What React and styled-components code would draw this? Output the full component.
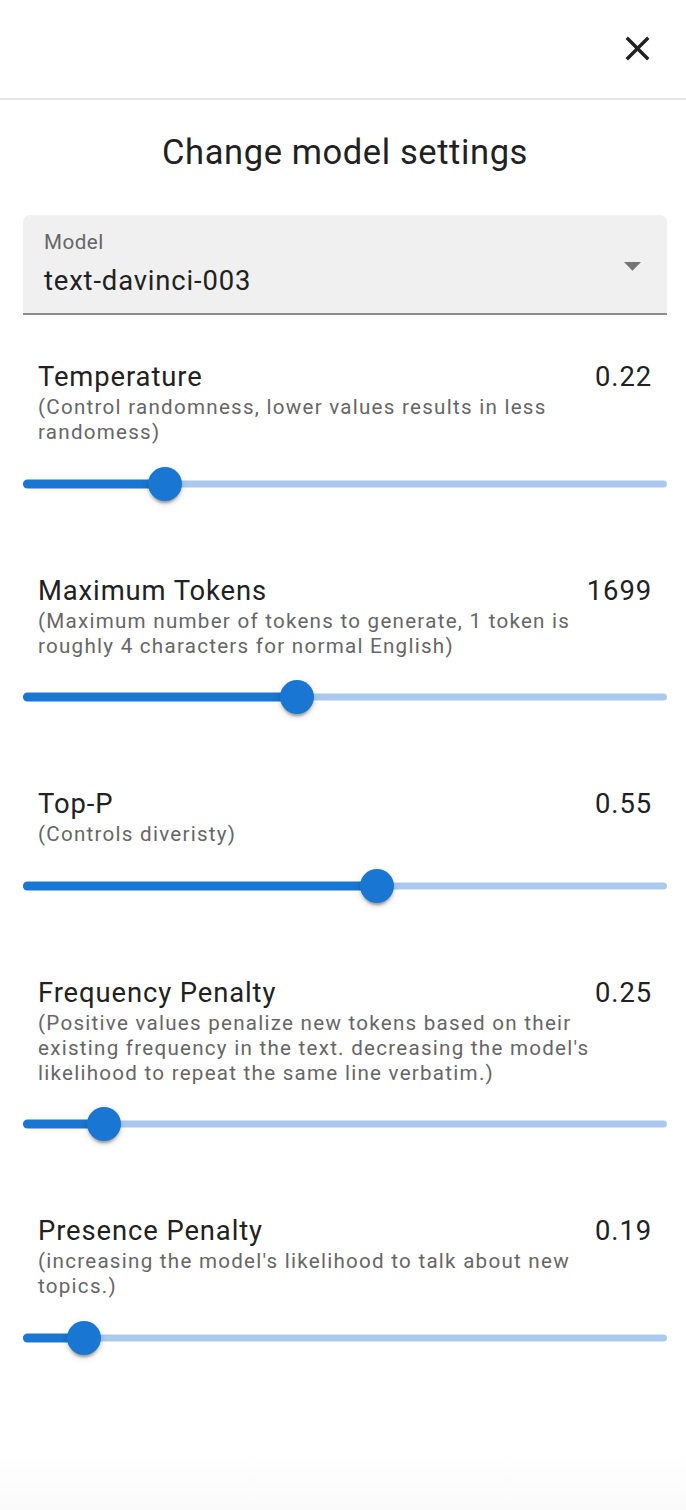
import React from 'react';
import styled, { createGlobalStyle } from 'styled-components';

const GlobalStyle = createGlobalStyle`
  * { box-sizing: border-box; }
  body {
    margin: 0;
    font-family: Roboto, "Liberation Sans", Arial, sans-serif;
    color: #212121;
    background: #fafafa;
  }
`;

const Page = styled.div`
  min-height: 1510px;
  display: flex;
  flex-direction: column;
  background: linear-gradient(to bottom, #ffffff calc(100% - 60px), #fafafa 100%);
`;

const Header = styled.header`
  height: 100px;
  display: flex;
  align-items: center;
  justify-content: flex-end;
  padding: 0 16px 2px 0;
  border-bottom: 2px solid #e6e6e6;
`;

const IconButton = styled.button`
  width: 66px;
  height: 66px;
  border: none;
  background: transparent;
  border-radius: 50%;
  display: flex;
  align-items: center;
  justify-content: center;
  padding: 0;
  cursor: pointer;
  color: #212121;
`;

const Content = styled.main`
  display: flex;
  flex-direction: column;
  padding: 0 19px 0 23px;
`;

const Title = styled.h2`
  margin: 32px 0 43px;
  font-size: 34.5px;
  line-height: 40px;
  font-weight: 400;
  letter-spacing: 0.6px;
  text-align: center;
  color: #212121;
`;

const SelectBox = styled.div`
  position: relative;
  background: #f0f0f0;
  border-radius: 7px 7px 0 0;
  border-bottom: 2px solid #8c8c8c;
  padding: 14px 21px 16px;
  cursor: pointer;
`;

const SelectLabel = styled.div`
  font-size: 20.6px;
  line-height: 26px;
  letter-spacing: 0.5px;
  color: #666666;
`;

const SelectValue = styled.div`
  margin-top: 10px;
  font-size: 27.4px;
  line-height: 32px;
  letter-spacing: 0.85px;
  color: #212121;
`;

const Arrow = styled.svg`
  position: absolute;
  right: 14px;
  top: 30px;
  fill: #757575;
`;

const Setting = styled.section`
  margin-top: ${p => (p.$first ? '46px' : '69px')};
`;

const LabelRow = styled.div`
  display: flex;
  justify-content: space-between;
  padding: 0 15px;
  font-size: 27.4px;
  line-height: 32px;
  letter-spacing: 0.9px;
  color: #212121;
`;

const Description = styled.p`
  margin: 2px 0 0;
  padding: 0 24px 0 15px;
  font-size: 20.6px;
  line-height: 25px;
  letter-spacing: 1.25px;
  color: #666666;
`;

const SliderRoot = styled.div`
  position: relative;
  height: 44px;
  margin-top: 16.6px;
`;

const Rail = styled.div`
  position: absolute;
  left: 0;
  right: 0;
  top: 50%;
  height: 7px;
  transform: translateY(-50%);
  border-radius: 4px;
  background: #a9caee;
`;

const Track = styled.div`
  position: absolute;
  left: 0;
  top: 50%;
  height: 9px;
  transform: translateY(-50%);
  border-radius: 5px;
  background: #1976d2;
`;

const Thumb = styled.div`
  position: absolute;
  top: 50%;
  width: 34px;
  height: 34px;
  border-radius: 50%;
  background: #1976d2;
  transform: translate(-50%, -50%);
  box-shadow: 0 5px 2px -3px rgba(0, 0, 0, 0.2), 0 3px 3px 0 rgba(0, 0, 0, 0.14),
    0 2px 8px 0 rgba(0, 0, 0, 0.12);
`;

function CloseIcon() {
  return (
    <svg width="41" height="41" viewBox="0 0 24 24" fill="currentColor">
      <path d="M19 6.41 17.59 5 12 10.59 6.41 5 5 6.41 10.59 12 5 17.59 6.41 19 12 13.41 17.59 19 19 17.59 13.41 12z" />
    </svg>
  );
}

function Slider({ value, min, max }) {
  const pct = ((value - min) / (max - min)) * 100;
  return (
    <SliderRoot>
      <Rail />
      <Track style={{ width: `${pct}%` }} />
      <Thumb style={{ left: `${pct}%` }} />
    </SliderRoot>
  );
}

const settings = [
  {
    label: 'Temperature',
    value: 0.22,
    min: 0,
    max: 1,
    description: '(Control randomness, lower values results in less randomess)',
  },
  {
    label: 'Maximum Tokens',
    value: 1699,
    min: 0,
    max: 4000,
    description:
      '(Maximum number of tokens to generate, 1 token is roughly 4 characters for normal English)',
  },
  {
    label: 'Top-P',
    value: 0.55,
    min: 0,
    max: 1,
    description: '(Controls diveristy)',
  },
  {
    label: 'Frequency Penalty',
    value: 0.25,
    min: 0,
    max: 2,
    description:
      "(Positive values penalize new tokens based on their existing frequency in the text. decreasing the model's likelihood to repeat the same line verbatim.)",
  },
  {
    label: 'Presence Penalty',
    value: 0.19,
    min: 0,
    max: 2,
    description: "(increasing the model's likelihood to talk about new topics.)",
  },
];

export default function App() {
  return (
    <Page>
      <GlobalStyle />
      <Header>
        <IconButton aria-label="close">
          <CloseIcon />
        </IconButton>
      </Header>
      <Content>
        <Title>Change model settings</Title>
        <SelectBox>
          <SelectLabel>Model</SelectLabel>
          <SelectValue>text-davinci-003</SelectValue>
          <Arrow width="41" height="41" viewBox="0 0 24 24">
            <path d="M7 10l5 5 5-5z" />
          </Arrow>
        </SelectBox>
        {settings.map((s, i) => (
          <Setting key={s.label} $first={i === 0}>
            <LabelRow>
              <span>{s.label}</span>
              <span>{s.value}</span>
            </LabelRow>
            <Description>{s.description}</Description>
            <Slider value={s.value} min={s.min} max={s.max} />
          </Setting>
        ))}
      </Content>
    </Page>
  );
}
